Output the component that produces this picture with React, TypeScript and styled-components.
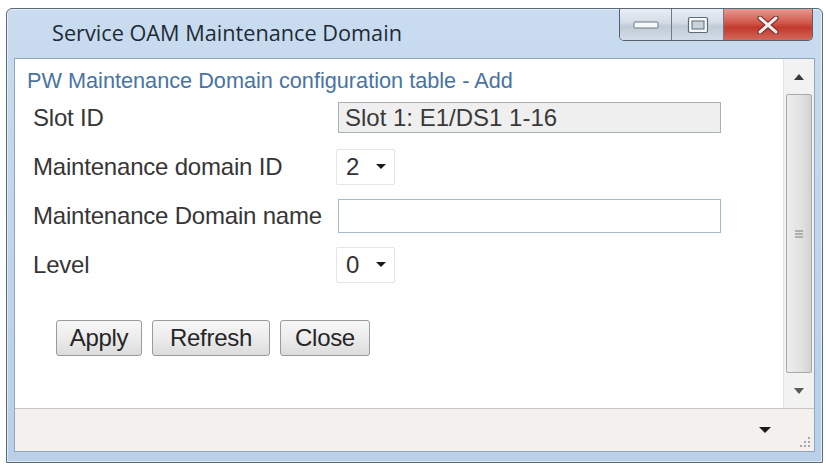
import React from "react";
import styled, { createGlobalStyle } from "styled-components";

const Global = createGlobalStyle`
  html, body { margin: 0; padding: 0; background: #ffffff; }
  body { font-family: "Liberation Sans", Arial, sans-serif; }
`;

const Window = styled.div`
  box-sizing: border-box;
  margin: 8px 0 0 6px;
  width: 817px;
  height: 455px;
  border: 1px solid #5b6875;
  border-radius: 6px 6px 0 0;
  background: linear-gradient(180deg, #c9dcef 0%, #bfd4ea 60%, #b9d0e8 100%);
  display: flex;
  flex-direction: column;
  padding: 0 7px 10px 7px;
  box-shadow: inset 0 0 0 1px rgba(255, 255, 255, 0.55);
`;

const TitleBar = styled.div`
  height: 49px;
  display: flex;
  justify-content: space-between;
  align-items: flex-start;
`;

const Title = styled.div`
  align-self: center;
  margin-left: 38px;
  margin-bottom: 2px;
  font-family: "Open Sans", "Noto Sans", sans-serif;
  font-size: 21.7px;
  color: #1e2a36;
`;

const Controls = styled.div`
  display: flex;
  margin-right: 2px;
  border: 1px solid #56616d;
  border-top: none;
  border-radius: 0 0 5px 5px;
  overflow: hidden;
  height: 31px;
`;

const CtlButton = styled.div<{ $close?: boolean; $w: number }>`
  width: ${(p) => p.$w}px;
  height: 100%;
  display: flex;
  align-items: center;
  justify-content: center;
  background: ${(p) =>
    p.$close
      ? "linear-gradient(180deg, #e79a90 0%, #d2574a 45%, #c23a2c 60%, #d2685b 100%)"
      : "linear-gradient(180deg, #e9eef4 0%, #d3dce6 45%, #c0cbd7 55%, #d3dce6 100%)"};
  & + & {
    border-left: 1px solid #6f7a86;
  }
`;

const Client = styled.div`
  flex: 1;
  display: grid;
  grid-template-columns: 1fr 31px;
  grid-template-rows: 1fr 43px;
  background: #ffffff;
  border: 1px solid #8fa6bd;
`;

const Content = styled.div`
  padding: 9px 0 0 12px;
  color: #333333;
`;

const Heading = styled.div`
  font-size: 21.7px;
  line-height: 26px;
  color: #4873a3;
`;

const Form = styled.div`
  margin-top: -1px;
  padding-left: 6px;
  display: grid;
  grid-template-columns: 303px 1fr;
  grid-auto-rows: 49px;
  align-items: center;
`;

const Label = styled.div`
  font-size: 24px;
  color: #363636;
  letter-spacing: -0.2px;
`;

const TextField = styled.div<{ $readOnly?: boolean }>`
  box-sizing: border-box;
  width: 383px;
  height: ${(p) => (p.$readOnly ? 31 : 34)}px;
  padding: 0 6px;
  display: flex;
  align-items: center;
  font-size: 24px;
  color: #3a3a3a;
  background: ${(p) => (p.$readOnly ? "#efefef" : "#ffffff")};
  border: 1px solid ${(p) => (p.$readOnly ? "#a8b0b8" : "#a7bacb")};
  margin-left: 2px;
`;

const Select = styled.div`
  box-sizing: border-box;
  width: 59px;
  height: 36px;
  display: flex;
  align-items: center;
  gap: 17px;
  padding-left: 9px;
  font-size: 24px;
  color: #333333;
  border: 1px solid #e6e6e6;
  border-radius: 2px;
`;

const Caret = styled.span<{ $size?: number }>`
  width: 0;
  height: 0;
  border-left: ${(p) => p.$size ?? 5}px solid transparent;
  border-right: ${(p) => p.$size ?? 5}px solid transparent;
  border-top: ${(p) => p.$size ?? 5}px solid #1a1a1a;
`;

const ButtonRow = styled.div`
  display: flex;
  gap: 10px;
  margin: 31px 0 0 29px;
`;

const Button = styled.div<{ $w: number }>`
  box-sizing: border-box;
  width: ${(p) => p.$w}px;
  height: 36px;
  display: flex;
  align-items: center;
  justify-content: center;
  font-size: 24px;
  color: #262626;
  border: 1px solid #9b9b9b;
  border-radius: 3px;
  background: linear-gradient(180deg, #f7f7f7 0%, #ececec 50%, #dcdcdc 100%);
  letter-spacing: -0.3px;
`;

const ScrollBar = styled.div`
  display: flex;
  flex-direction: column;
  background: #f2f2f2;
  border-left: 1px solid #e2e2e2;
`;

const ScrollArrow = styled.div`
  height: 35px;
  display: flex;
  align-items: center;
  justify-content: center;
`;

const Thumb = styled.div`
  flex: 1;
  margin: 0 2px;
  border: 1px solid #a9a9a9;
  border-radius: 2px;
  background: linear-gradient(90deg, #eeeeee 0%, #e2e2e2 60%, #d2d2d2 100%);
  display: flex;
  align-items: center;
  justify-content: center;
`;

const StatusBar = styled.div`
  grid-column: 1 / span 2;
  display: flex;
  align-items: center;
  justify-content: flex-end;
  gap: 24px;
  padding-right: 3px;
  background: #f3f0ee;
  border-top: 1px solid #c6c6c6;
`;

const Grip = styled.svg`
  align-self: flex-end;
  margin-bottom: 2px;
`;

const ArrowUp = () => (
  <svg width="10" height="6" viewBox="0 0 10 6">
    <path d="M0 6 L5 0 L10 6 Z" fill="#3a3a3a" />
  </svg>
);

const ArrowDown = () => (
  <svg width="10" height="6" viewBox="0 0 10 6">
    <path d="M0 0 L5 6 L10 0 Z" fill="#5a5a5a" />
  </svg>
);

export default function App() {
  return (
    <>
      <Global />
      <Window>
        <TitleBar>
          <Title>Service OAM Maintenance Domain</Title>
          <Controls>
            <CtlButton $w={51}>
              <svg width="26" height="10" viewBox="0 0 26 10">
                <rect x="1" y="2" width="24" height="6" rx="1" fill="#f6f8fa" stroke="#6b7885" strokeWidth="1" />
              </svg>
            </CtlButton>
            <CtlButton $w={51}>
              <svg width="22" height="18" viewBox="0 0 22 18">
                <rect x="1.5" y="1.5" width="19" height="15" rx="1.5" fill="#f6f8fa" stroke="#5d6a77" strokeWidth="1.2" />
                <rect x="5" y="5" width="12" height="8" fill="#c9d3de" stroke="#5d6a77" strokeWidth="1" />
              </svg>
            </CtlButton>
            <CtlButton $close $w={88}>
              <svg width="22" height="18" viewBox="0 0 22 18">
                <path d="M3 2 L19 16 M19 2 L3 16" stroke="#6a2a24" strokeWidth="5" strokeLinecap="round" />
                <path d="M3 2 L19 16 M19 2 L3 16" stroke="#f4eeee" strokeWidth="3" strokeLinecap="round" />
              </svg>
            </CtlButton>
          </Controls>
        </TitleBar>
        <Client>
          <Content>
            <Heading>PW Maintenance Domain configuration table - Add</Heading>
            <Form>
              <Label>Slot ID</Label>
              <TextField $readOnly>Slot 1: E1/DS1 1-16</TextField>
              <Label>Maintenance domain ID</Label>
              <Select>
                2 <Caret $size={5} />
              </Select>
              <Label>Maintenance Domain name</Label>
              <TextField />
              <Label>Level</Label>
              <Select>
                0 <Caret $size={5} />
              </Select>
            </Form>
            <ButtonRow>
              <Button $w={86}>Apply</Button>
              <Button $w={118}>Refresh</Button>
              <Button $w={90}>Close</Button>
            </ButtonRow>
          </Content>
          <ScrollBar>
            <ScrollArrow>
              <ArrowUp />
            </ScrollArrow>
            <Thumb>
              <svg width="10" height="10" viewBox="0 0 10 10">
                <path d="M1 2 H9 M1 5 H9 M1 8 H9" stroke="#7a7a7a" strokeWidth="1.2" />
              </svg>
            </Thumb>
            <ScrollArrow>
              <ArrowDown />
            </ScrollArrow>
          </ScrollBar>
          <StatusBar>
            <Caret $size={6} />
            <Grip width="16" height="16" viewBox="0 0 16 16">
              {[
                [13, 4],
                [13, 8],
                [9, 8],
                [13, 12],
                [9, 12],
                [5, 12],
              ].map(([x, y]) => (
                <rect key={`${x}-${y}`} x={x} y={y} width="2" height="2" fill="#a8a8a8" />
              ))}
            </Grip>
          </StatusBar>
        </Client>
      </Window>
    </>
  );
}
